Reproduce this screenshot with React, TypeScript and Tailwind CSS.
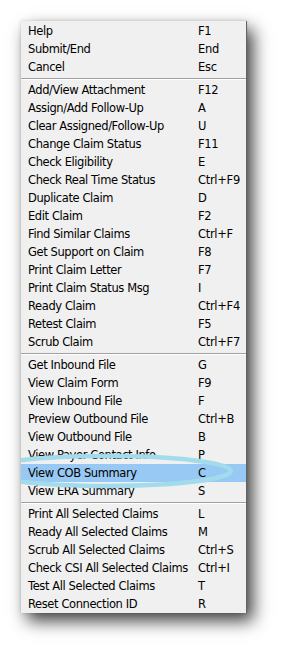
const groups: Array<Array<[string, string]>> = [
  [
    ['Help', 'F1'],
    ['Submit/End', 'End'],
    ['Cancel', 'Esc'],
  ],
  [
    ['Add/View Attachment', 'F12'],
    ['Assign/Add Follow-Up', 'A'],
    ['Clear Assigned/Follow-Up', 'U'],
    ['Change Claim Status', 'F11'],
    ['Check Eligibility', 'E'],
    ['Check Real Time Status', 'Ctrl+F9'],
    ['Duplicate Claim', 'D'],
    ['Edit Claim', 'F2'],
    ['Find Similar Claims', 'Ctrl+F'],
    ['Get Support on Claim', 'F8'],
    ['Print Claim Letter', 'F7'],
    ['Print Claim Status Msg', 'I'],
    ['Ready Claim', 'Ctrl+F4'],
    ['Retest Claim', 'F5'],
    ['Scrub Claim', 'Ctrl+F7'],
  ],
  [
    ['Get Inbound File', 'G'],
    ['View Claim Form', 'F9'],
    ['View Inbound File', 'F'],
    ['Preview Outbound File', 'Ctrl+B'],
    ['View Outbound File', 'B'],
    ['View Payer Contact Info', 'P'],
    ['View COB Summary', 'C'],
    ['View ERA Summary', 'S'],
  ],
  [
    ['Print All Selected Claims', 'L'],
    ['Ready All Selected Claims', 'M'],
    ['Scrub All Selected Claims', 'Ctrl+S'],
    ['Check CSI All Selected Claims', 'Ctrl+I'],
    ['Test All Selected Claims', 'T'],
    ['Reset Connection ID', 'R'],
  ],
]

const App = () => {
  return (
    <div className="min-h-[654px] w-[289px] bg-white pl-[21px] pt-[21px]">
      <div className="relative w-[226px] overflow-hidden border-r border-[#646464] bg-[#f0f0f0] pt-px shadow-[6px_8px_16px_rgba(0,0,0,0.75),0_0_3px_rgba(0,0,0,0.15)] font-['DejaVu_Sans',sans-serif] text-[11.5px] text-black">
        {groups.map((group, gi) => (
          <div key={gi}>
            {gi > 0 && (
              <div className="flex h-[5px] flex-col pt-[2px]">
                <div className="h-px bg-[#a0a0a0]" />
                <div className="h-px bg-white" />
              </div>
            )}
            {group.map(([label, key]) => (
              <div
                key={label}
                className={`flex h-[18px] items-center whitespace-nowrap pt-px ${
                  label === 'View COB Summary' ? 'bg-[#98c8f4]' : ''
                }`}
              >
                <span className="w-[177px] pl-[7px] tracking-[-0.4px]">
                  {label}
                </span>
                <span className="tracking-[-0.3px]">{key}</span>
              </div>
            ))}
          </div>
        ))}
        <svg
          className="pointer-events-none absolute left-0 top-0"
          width="226"
          height="600"
        >
          <ellipse
            cx="86"
            cy="450"
            rx="124"
            ry="15"
            fill="none"
            stroke="#a2dcec"
            strokeWidth="4.5"
          />
        </svg>
      </div>
    </div>
  )
}

export default App
